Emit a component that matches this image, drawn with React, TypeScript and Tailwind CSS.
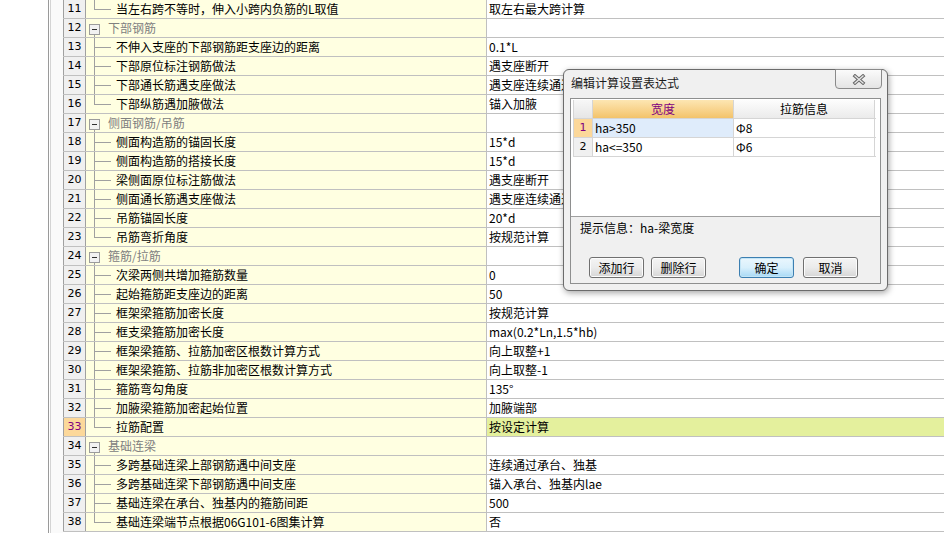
import React from 'react';

type Kind = 'group' | 'child' | 'last';
type Row = { n: number; label: string; value?: string; kind: Kind };

const rows: Row[] = [
  { n: 11, label: '当左右跨不等时，伸入小跨内负筋的L取值', value: '取左右最大跨计算', kind: 'last' },
  { n: 12, label: '下部钢筋', kind: 'group' },
  { n: 13, label: '不伸入支座的下部钢筋距支座边的距离', value: '0.1*L', kind: 'child' },
  { n: 14, label: '下部原位标注钢筋做法', value: '遇支座断开', kind: 'child' },
  { n: 15, label: '下部通长筋遇支座做法', value: '遇支座连续通过', kind: 'child' },
  { n: 16, label: '下部纵筋遇加腋做法', value: '锚入加腋', kind: 'last' },
  { n: 17, label: '侧面钢筋/吊筋', kind: 'group' },
  { n: 18, label: '侧面构造筋的锚固长度', value: '15*d', kind: 'child' },
  { n: 19, label: '侧面构造筋的搭接长度', value: '15*d', kind: 'child' },
  { n: 20, label: '梁侧面原位标注筋做法', value: '遇支座断开', kind: 'child' },
  { n: 21, label: '侧面通长筋遇支座做法', value: '遇支座连续通过', kind: 'child' },
  { n: 22, label: '吊筋锚固长度', value: '20*d', kind: 'child' },
  { n: 23, label: '吊筋弯折角度', value: '按规范计算', kind: 'last' },
  { n: 24, label: '箍筋/拉筋', kind: 'group' },
  { n: 25, label: '次梁两侧共增加箍筋数量', value: '0', kind: 'child' },
  { n: 26, label: '起始箍筋距支座边的距离', value: '50', kind: 'child' },
  { n: 27, label: '框架梁箍筋加密长度', value: '按规范计算', kind: 'child' },
  { n: 28, label: '框支梁箍筋加密长度', value: 'max(0.2*Ln,1.5*hb)', kind: 'child' },
  { n: 29, label: '框架梁箍筋、拉筋加密区根数计算方式', value: '向上取整+1', kind: 'child' },
  { n: 30, label: '框架梁箍筋、拉筋非加密区根数计算方式', value: '向上取整-1', kind: 'child' },
  { n: 31, label: '箍筋弯勾角度', value: '135°', kind: 'child' },
  { n: 32, label: '加腋梁箍筋加密起始位置', value: '加腋端部', kind: 'child' },
  { n: 33, label: '拉筋配置', value: '按设定计算', kind: 'last' },
  { n: 34, label: '基础连梁', kind: 'group' },
  { n: 35, label: '多跨基础连梁上部钢筋遇中间支座', value: '连续通过承台、独基', kind: 'child' },
  { n: 36, label: '多跨基础连梁下部钢筋遇中间支座', value: '锚入承台、独基内lae', kind: 'child' },
  { n: 37, label: '基础连梁在承台、独基内的箍筋间距', value: '500', kind: 'child' },
  { n: 38, label: '基础连梁端节点根据06G101-6图集计算', value: '否', kind: 'last' },
];

const SELECTED = 33;

function TreeLines({ kind }: { kind: Kind }) {
  if (kind === 'group') {
    return (
      <svg width="20" height="18" className="shrink-0" shapeRendering="crispEdges">
        <line x1="8.5" y1="16" x2="8.5" y2="18" stroke="#a0a0a0" />
        <rect x="3.5" y="5.5" width="10" height="10" fill="#f2f2f2" stroke="#9c9c9c" />
        <line x1="6" y1="10.5" x2="11" y2="10.5" stroke="#303030" />
      </svg>
    );
  }
  return (
    <svg width="28" height="18" className="shrink-0" shapeRendering="crispEdges">
      <line x1="8.5" y1="0" x2="8.5" y2={kind === 'last' ? 10 : 18} stroke="#a0a0a0" />
      <line x1="8.5" y1="9.5" x2="25" y2="9.5" stroke="#a0a0a0" />
    </svg>
  );
}

function GridRow({ row }: { row: Row }) {
  const sel = row.n === SELECTED;
  return (
    <div className="flex h-[19px] border-b border-[#c0c0c0]">
      <div
        className={
          'w-[23px] shrink-0 border-x border-[#a0a0a0] flex items-center justify-center text-[11px] font-["DejaVu_Sans",sans-serif] ' +
          (sel ? 'bg-[#fcd89a] text-[#800080]' : 'bg-[#f0f0f0] text-black')
        }
      >
        {row.n}
      </div>
      <div className="w-[401px] shrink-0 flex items-center bg-[#ffffe1] border-r border-[#c0c0c0]">
        <TreeLines kind={row.kind} />
        <span
          className={
            'ml-[2px] whitespace-nowrap text-[12px] leading-[18px] ' +
            (row.kind === 'group' ? 'text-[#808080]' : 'text-black')
          }
        >
          {row.label}
        </span>
      </div>
      <div
        className={
          'flex-1 flex items-center pl-[2px] whitespace-nowrap text-[12px] text-black ' +
          (sel ? 'bg-[#e4f09d]' : 'bg-white')
        }
      >
        {row.value}
      </div>
    </div>
  );
}

function WinButton({ label, primary }: { label: string; primary?: boolean }) {
  return (
    <button
      type="button"
      className={
        'w-[55px] h-[21px] rounded-[3px] border text-[12px] text-black flex items-center justify-center ' +
        (primary
          ? 'border-[#3c7fb1] bg-gradient-to-b from-[#eaf6fd] via-[#d9f0fc] to-[#a7d9f5] shadow-[inset_0_0_0_1px_#c4e5f6]'
          : 'border-[#707070] bg-gradient-to-b from-[#f4f4f4] via-[#ebebeb] to-[#d6d6d6] shadow-[inset_0_0_0_1px_#fcfcfc]')
      }
    >
      {label}
    </button>
  );
}

function ExpressionDialog() {
  return (
    <div className="absolute left-[563px] top-[69px] w-[325px] h-[222px] rounded-[6px] border border-[#6b6b6b] bg-[#f0f0f0] shadow-[1px_2px_6px_rgba(0,0,0,0.35)]">
      <div className="h-[28px] pl-[7px] pt-[5px] text-[12px] leading-[16px] text-[#1a1a1a]">编辑计算设置表达式</div>
      <div className="absolute left-[271px] top-[-1px] w-[47px] h-[20px] rounded-b-[4px] border border-[#8a8a8a] bg-gradient-to-b from-[#fbfbfb] to-[#e4e4e4] flex items-center justify-center">
        <svg width="14" height="11" viewBox="0 0 14 11">
          <path d="M3 2 L11 9 M11 2 L3 9" stroke="#6a6a6a" strokeWidth="3.4" strokeLinecap="square" />
          <path d="M3 2 L11 9 M11 2 L3 9" stroke="#e8e8e8" strokeWidth="1.3" strokeLinecap="square" />
        </svg>
      </div>
      <div className="mx-[6px] h-[186px] border border-[#8e8f8f] flex flex-col">
        <div className="h-[118px] bg-white border-b border-[#a0a0a0] pl-[2px] pt-[1px] pr-[4px]">
          <div className="flex h-[19px] border-b border-[#d5d5d5] text-[12px]">
            <div className="w-[20px] border-x border-[#d5d5d5] bg-gradient-to-b from-[#f7f7f7] to-[#e6e6e6]" />
            <div className="w-[141px] border-r border-[#d5d5d5] bg-gradient-to-b from-[#fde6b2] to-[#f3c36a] text-[#800080] flex items-center justify-center">
              宽度
            </div>
            <div className="w-[141px] border-r border-[#d5d5d5] bg-gradient-to-b from-[#fdfdfd] to-[#ebebeb] text-black flex items-center justify-center">
              拉筋信息
            </div>
          </div>
          <div className="flex h-[19px] border-b border-[#d5d5d5] text-[12px]">
            <div className="w-[20px] border-x border-[#d5d5d5] bg-[#fcd89a] text-[#800080] flex items-center justify-center font-['DejaVu_Sans',sans-serif] text-[11px]">
              1
            </div>
            <div className="w-[141px] border-r border-[#d5d5d5] bg-[#dfecfb] pl-[2px] flex items-center">ha&gt;350</div>
            <div className="w-[141px] border-r border-[#d5d5d5] pl-[2px] flex items-center">Φ8</div>
          </div>
          <div className="flex h-[19px] border-b border-[#d5d5d5] text-[12px]">
            <div className="w-[20px] border-x border-[#d5d5d5] bg-[#f0f0f0] flex items-center justify-center font-['DejaVu_Sans',sans-serif] text-[11px]">
              2
            </div>
            <div className="w-[141px] border-r border-[#d5d5d5] pl-[2px] flex items-center">ha&lt;=350</div>
            <div className="w-[141px] border-r border-[#d5d5d5] pl-[2px] flex items-center">Φ6</div>
          </div>
        </div>
        <div className="h-[22px] pl-[9px] flex items-center text-[12px] text-black">提示信息：ha-梁宽度</div>
        <div className="mt-[18px] flex pl-[18px]">
          <WinButton label="添加行" />
          <div className="w-[7px]" />
          <WinButton label="删除行" />
          <div className="w-[33px]" />
          <WinButton label="确定" primary />
          <div className="w-[9px]" />
          <WinButton label="取消" />
        </div>
      </div>
    </div>
  );
}

export default function App() {
  return (
    <div className="relative w-[944px] h-[533px] overflow-hidden bg-white font-['Noto_Sans_CJK_SC',sans-serif]">
      <div className="flex h-full">
        <div className="w-[48px] shrink-0 bg-white" />
        <div className="w-[1px] shrink-0 bg-[#9a9a9a]" />
        <div className="w-[1px] shrink-0 bg-white" />
        <div className="w-[1px] shrink-0 bg-[#d4d4d4]" />
        <div className="w-[12px] shrink-0 bg-[#fafafa]" />
        <div className="flex-1 flex flex-col">
          {rows.map((r) => (
            <GridRow key={r.n} row={r} />
          ))}
        </div>
      </div>
      <ExpressionDialog />
    </div>
  );
}
